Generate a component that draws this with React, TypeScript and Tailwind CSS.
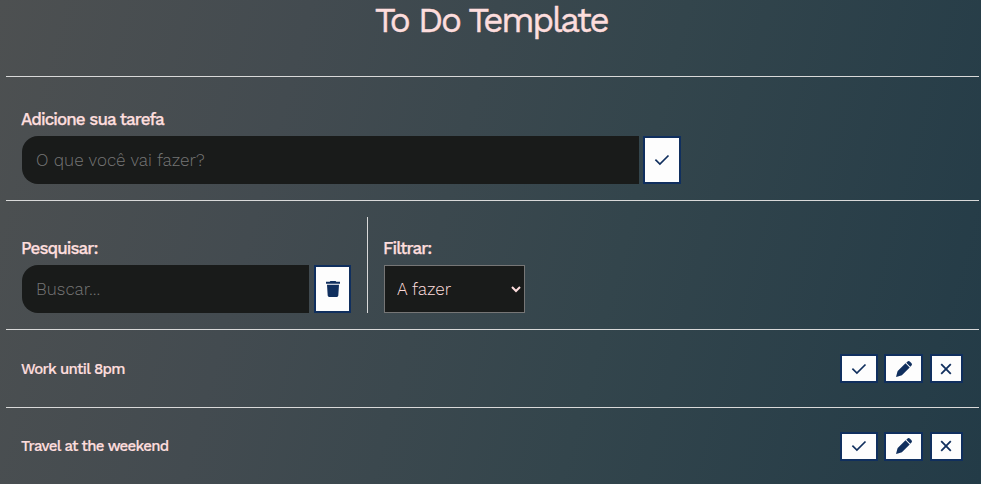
import React from "react";

function Check() {
  return (
    <svg width="16" height="16" viewBox="0 0 16 16" fill="none" stroke="currentColor" strokeWidth="1.7">
      <path d="M1.400 7.700 5.900 12 14.500 3.500" />
    </svg>
  );
}

function Trash() {
  return (
    <svg width="14" height="16" viewBox="0 0 14 16" fill="currentColor">
      <path d="M4.400 0h5.200l.7.800H14v2H0v-2h3.700zM1 3.800h12l-.7 10.800A1.500 1.500 0 0 1 10.800 16H3.200a1.500 1.500 0 0 1-1.500-1.400z" />
    </svg>
  );
}

function Pencil() {
  return (
    <svg width="16" height="16" viewBox="0 0 16 16" fill="currentColor">
      <path d="M10.300 1.700 11.300.700a1.900 1.900 0 0 1 2.700 0L15.300 2a1.900 1.900 0 0 1 0 2.700l-1 1zM9.500 2.300 13.700 6.500 6.400 13.800a3 3 0 0 1-1.200.800L0 16l1.400-5.200a3 3 0 0 1 .8-1.200z" />
    </svg>
  );
}

function Cross() {
  return (
    <svg className="mr-px" width="12" height="12" viewBox="0 0 12 12" fill="none" stroke="currentColor" strokeWidth="1.8">
      <path d="m1.200 1.200 9.600 9.600m0-9.600-9.600 9.600" />
    </svg>
  );
}

const btn = "flex shrink-0 items-center justify-center border-2 border-[#102f5e] bg-[#fdfdfd] text-[#102f5e]";
const field = "h-12 rounded-l-[16px] bg-[#191b1a] pl-[14px] text-[17px] font-light text-[#fddddd] outline-none placeholder:font-light placeholder:text-[#757575]";
const label = "-ml-px text-[17px] leading-6 font-medium tracking-[-0.93px] [-webkit-text-stroke:0.25px_#fddddd]";

function Task({ title, className, titleClass, iconClass }: { title: string; className: string; titleClass: string; iconClass: string }) {
  return (
    <div className={`flex items-start justify-between border-t border-[#d9d9d9] pr-4 pl-4 ${className}`}>
      <h3 className={`-ml-px text-[15px] leading-6 font-medium tracking-[-0.7px] [-webkit-text-stroke:0.2px_#fddddd] ${titleClass}`}>{title}</h3>
      <div className="flex">
        <button className={`${btn} ${iconClass} mr-[6px] h-[29px] w-[38px]`}><Check /></button>
        <button className={`${btn} ${iconClass} mr-[7px] h-[29px] w-[39px]`}><Pencil /></button>
        <button className={`${btn} ${iconClass} h-[29px] w-[33px]`}><Cross /></button>
      </div>
    </div>
  );
}

export default function App() {
  return (
    <main className="h-[484px] w-[981px] overflow-hidden bg-[linear-gradient(105deg,#4d5051_0%,#434b50_28%,#33454c_62%,#233b47_100%)] pr-[2px] pl-[6px] font-['Work_Sans','Inter',sans-serif] text-[#fddddd]">
      <header className="flex h-[76px] justify-center">
        <h1 className="mr-[3px] text-[35px] leading-[40px] tracking-[-2.3px] [-webkit-text-stroke:0.4px_#fddddd]">To Do Template</h1>
      </header>
      <section className="h-[124px] border-t border-[#d9d9d9] px-4 pt-[30px]">
        <p className={`${label} mb-[5px]`}>Adicione sua tarefa</p>
        <div className="flex gap-1">
          <input className={`${field} w-[617px]`} placeholder="O que você vai fazer?" />
          <button className={`${btn} h-12 w-[38px]`}><Check /></button>
        </div>
      </section>
      <section className="flex h-[129px] border-t border-[#d9d9d9] px-4 pt-4">
        <div className="h-24 w-[346px] border-r border-[#d9d9d9] pt-[19px]">
          <p className={`${label} mb-[5px]`}>Pesquisar:</p>
          <div className="flex gap-[5px]">
            <input className={`${field} w-[287px]`} placeholder="Buscar..." />
            <button className={`${btn} h-12 w-[37px]`}><Trash /></button>
          </div>
        </div>
        <div className="pt-[19px] pl-4">
          <p className={`${label} mb-[5px]`}>Filtrar:</p>
          <select className="h-12 w-[141px] border border-[#767676] bg-[#191b1a] pl-2 text-[17px] font-light text-[#fddddd] outline-none">
            <option>A fazer</option>
          </select>
        </div>
      </section>
      <Task title="Work until 8pm" className="h-[78px] pt-6" titleClass="mt-[3px]" iconClass="" />
      <Task title="Travel at the weekend" className="h-[77px] pt-6" titleClass="mt-[2px]" iconClass="pb-[2px]" />
    </main>
  );
}
